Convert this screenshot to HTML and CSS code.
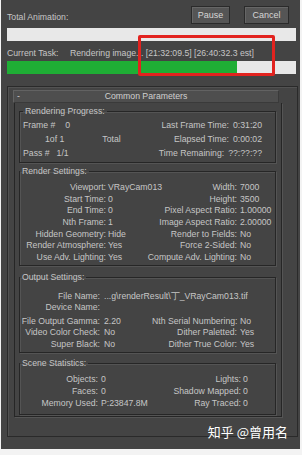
FILE: index.html
```html
<!DOCTYPE html>
<html lang="en">
  <head>
    <meta charset="UTF-8" />
    <meta name="viewport" content="width=device-width, initial-scale=1.0" />
    <title>Rendering</title>
    <link rel="stylesheet" href="styles.css">
  </head>
  <body>
    <div class="window">
      <!-- Progress bars -->
      <div class="top-row">
        <div class="top-label">Total Animation:</div>
        <div class="buttons">
          <button class="btn pause">Pause</button>
          <button class="btn cancel">Cancel</button>
        </div>
      </div>
      <div class="bar"></div>
      <div class="task-row">
        <span class="task-label">Current Task:</span>
        <span class="task-text">Rendering image... [21:32:09.5] [26:40:32.3 est]</span>
      </div>
      <div class="bar"><div class="bar-fill" style="width: 79.6%"></div></div>

      <!-- red annotation box -->
      <div class="highlight"></div>

      <!-- Common Parameters rollout -->
      <div class="frame">
        <div class="rollout">
          <div class="rollout-head">
            <span class="minus">-</span>
            <span class="title">Common Parameters</span>
          </div>
          <div class="rollout-body">
            <fieldset class="group progress">
              <legend>Rendering Progress:</legend>
              <div class="row">
                <div><span>Frame #</span><span class="frame-no">0</span></div>
                <div class="right">Last Frame Time:<span class="val">0:31:20</span></div>
              </div>
              <div class="row">
                <div><span class="of">1of 1</span><span class="total">Total</span></div>
                <div class="right">Elapsed Time:<span class="val">0:00:02</span></div>
              </div>
              <div class="row">
                <div><span>Pass #</span><span class="pass-no">1/1</span></div>
                <div class="right">Time Remaining:<span class="val">??:??:??</span></div>
              </div>
            </fieldset>

            <fieldset class="group render">
              <legend>Render Settings:</legend>
              <div class="row"><span class="k">Viewport:</span><span class="v">VRayCam013</span><span class="k2">Width:</span><span class="v2">7000</span></div>
              <div class="row"><span class="k">Start Time:</span><span class="v">0</span><span class="k2">Height:</span><span class="v2">3500</span></div>
              <div class="row"><span class="k">End Time:</span><span class="v">0</span><span class="k2">Pixel Aspect Ratio:</span><span class="v2">1.00000</span></div>
              <div class="row"><span class="k">Nth Frame:</span><span class="v">1</span><span class="k2">Image Aspect Ratio:</span><span class="v2">2.00000</span></div>
              <div class="row"><span class="k">Hidden Geometry:</span><span class="v">Hide</span><span class="k2">Render to Fields:</span><span class="v2">No</span></div>
              <div class="row"><span class="k">Render Atmosphere:</span><span class="v">Yes</span><span class="k2">Force 2-Sided:</span><span class="v2">No</span></div>
              <div class="row"><span class="k">Use Adv. Lighting:</span><span class="v">Yes</span><span class="k2">Compute Adv. Lighting:</span><span class="v2">No</span></div>
            </fieldset>

            <fieldset class="group output">
              <legend>Output Settings:</legend>
              <div class="row"><span class="k">File Name:</span><span class="v wide">...g\renderResult\丁_VRayCam013.tif</span></div>
              <div class="row spaced"><span class="k">Device Name:</span></div>
              <div class="row"><span class="k">File Output Gamma:</span><span class="v">2.20</span><span class="k2">Nth Serial Numbering:</span><span class="v2">No</span></div>
              <div class="row"><span class="k">Video Color Check:</span><span class="v">No</span><span class="k2">Dither Paletted:</span><span class="v2">Yes</span></div>
              <div class="row"><span class="k">Super Black:</span><span class="v">No</span><span class="k2">Dither True Color:</span><span class="v2">Yes</span></div>
            </fieldset>

            <fieldset class="group stats">
              <legend>Scene Statistics:</legend>
              <div class="row"><span class="k">Objects:</span><span class="v">0</span><span class="k2">Lights:</span><span class="v2">0</span></div>
              <div class="row"><span class="k">Faces:</span><span class="v">0</span><span class="k2">Shadow Mapped:</span><span class="v2">0</span></div>
              <div class="row"><span class="k">Memory Used:</span><span class="v">P:23847.8M</span><span class="k2">Ray Traced:</span><span class="v2">0</span></div>
            </fieldset>
          </div>
        </div>
      </div>

      <div class="watermark">知乎 @曾用名</div>
    </div>
  </body>
</html>
```

FILE: styles.css
```css
body {
  margin: 0;
  background: #f3f3f3;
  font-family: "Liberation Sans", Arial, sans-serif;
  font-size: 8.7px;
  color: #c6c6c6;
}

.window {
  position: relative;
  width: 299px;
  height: 449px;
  margin-left: 1px;
  padding: 0 2px 0 6px;
  box-sizing: border-box;
  background: #444444;
  overflow: hidden;
}

/* Top progress area */
.top-row {
  display: flex;
  justify-content: space-between;
  align-items: flex-end;
  padding-top: 6px;
  height: 18px;
}

.top-label {
  line-height: 11px;
  margin-bottom: 1px;
}

.buttons {
  display: flex;
  gap: 14px;
  margin-right: 9px;
}

.btn {
  height: 18px;
  padding: 0;
  border: 1px solid #2a2a2a;
  background: #555555;
  box-shadow: inset 1px 1px 0 #666666;
  color: #d6d6d6;
  font-family: inherit;
  font-size: 9px;
}

.pause {
  width: 39px;
}

.cancel {
  width: 45px;
}

.bar {
  width: 289px;
  height: 13px;
  margin-top: 4px;
  background: #e8e8e8;
}

.bar-fill {
  height: 100%;
  background: #1fae35;
}

.task-row {
  padding-top: 7px;
  margin-bottom: -2px;
  line-height: 11px;
  white-space: nowrap;
}

.task-text {
  margin-left: 9px;
}

.highlight {
  position: absolute;
  left: 137px;
  top: 35px;
  width: 137px;
  height: 41px;
  box-sizing: border-box;
  border: 3px solid #e2231f;
  border-radius: 2px;
}

/* Rollout frame */
.frame {
  width: 291px;
  height: 351px;
  margin-top: 12px;
  box-sizing: border-box;
  border: 1px solid #2a2a2a;
  box-shadow: inset 1px 1px 0 #525252;
}

.rollout {
  width: 269px;
  margin: 3px 0 0 5px;
}

.rollout-head {
  position: relative;
  width: 266px;
  height: 13px;
  box-sizing: border-box;
  border: 1px solid #626262;
  border-right-color: #3a3a3a;
  border-bottom-color: #3a3a3a;
  background: #4e4e4e;
  line-height: 11px;
  text-align: center;
  color: #d0d0d0;
}

.rollout-head .minus {
  position: absolute;
  left: 3px;
  top: 0;
}

.rollout-body {
  margin-left: 1px;
  padding: 3px 5px 1px 4px;
  border: 1px solid #262626;
  border-top: none;
  box-shadow: 1px 1px 0 #555555;
}

/* Group boxes */
.group {
  margin: 0;
  padding: 0;
  min-width: 0;
  border: 1px solid #262626;
  box-shadow: inset 1px 1px 0 #545454, 1px 1px 0 #545454;
}

.group legend {
  padding: 0 2px;
  line-height: 11px;
}

.row {
  display: grid;
  white-space: nowrap;
}

.row .k,
.row .k2 {
  text-align: right;
}

/* Rendering Progress */
.progress {
  padding: 1px 0 2px 3px;
}

.progress .row {
  grid-template-columns: 1fr auto;
  height: 14px;
  line-height: 14px;
}

.progress .right {
  padding-right: 13px;
  text-align: right;
}

.progress .val {
  margin-left: 4px;
}

.frame-no {
  margin-left: 10px;
}

.pass-no {
  margin-left: 7px;
}

.of {
  margin-left: 22px;
}

.total {
  margin-left: 38px;
}

/* Render Settings */
.render {
  margin-top: 3px;
  padding: 5px 0 1px;
}

.render .row {
  grid-template-columns: 86px 38px 93px 37px;
  height: 11.7px;
  line-height: 11.7px;
}

.render .v {
  padding-left: 2px;
}

.render .v2 {
  padding-left: 3px;
}

/* Output Settings */
.output {
  margin-top: 6px;
  padding: 8px 0 2px;
}

.output .row {
  grid-template-columns: 80px 52px 85px 37px;
  height: 11.5px;
  line-height: 11.5px;
}

.output .row.spaced {
  margin-bottom: 2px;
}

.output .v {
  padding-left: 4px;
}

.output .v.wide {
  grid-column: 2 / 5;
}

.output .v2 {
  padding-left: 3px;
}

/* Scene Statistics */
.stats {
  margin-top: 5px;
  padding: 4px 0 5px;
}

.stats .row {
  grid-template-columns: 78px 75px 68px 33px;
  height: 12px;
  line-height: 12px;
}

.stats .v {
  padding-left: 3px;
}

.stats .v2 {
  padding-left: 2px;
}

.watermark {
  position: absolute;
  right: 12px;
  bottom: 9px;
  font-family: "Noto Sans CJK SC", sans-serif;
  font-size: 13px;
  line-height: 16px;
  color: #ffffff;
}
```
